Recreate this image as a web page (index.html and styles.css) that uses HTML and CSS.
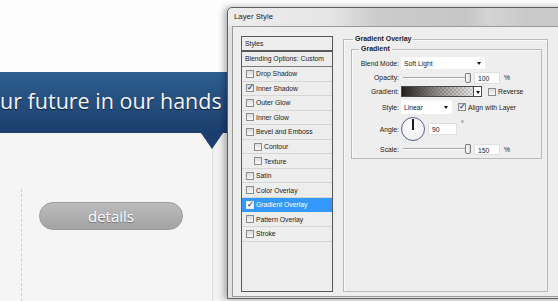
FILE: index.html
```html
<!DOCTYPE html>
<html lang="en">
<head>
    <meta charset="UTF-8">
    <title>Layer Style</title>
    <link rel="stylesheet" href="styles.css">
</head>
<body>
    <div class="site">
        <div class="top"></div>
        <div class="banner">
            <h1>ur future in our hands</h1>
        </div>
        <div class="card">
            <div class="card-main">
                <div class="col">
                    <a href="#" class="details">details</a>
                </div>
            </div>
        </div>
    </div>

    <!-- dialog window over the page -->
    <div class="dialog">
        <div class="titlebar">Layer Style</div>
        <div class="client">
            <div class="styles-list">
                <div class="list-head">Styles</div>
                <div class="list-blend">Blending Options: Custom</div>
                <div class="item"><span class="cb"></span>Drop Shadow</div>
                <div class="item"><span class="cb on"></span>Inner Shadow</div>
                <div class="item"><span class="cb"></span>Outer Glow</div>
                <div class="item"><span class="cb"></span>Inner Glow</div>
                <div class="item"><span class="cb"></span>Bevel and Emboss</div>
                <div class="item sub"><span class="cb"></span>Contour</div>
                <div class="item sub"><span class="cb"></span>Texture</div>
                <div class="item"><span class="cb"></span>Satin</div>
                <div class="item"><span class="cb"></span>Color Overlay</div>
                <div class="item selected"><span class="cb on"></span>Gradient Overlay</div>
                <div class="item"><span class="cb"></span>Pattern Overlay</div>
                <div class="item"><span class="cb"></span>Stroke</div>
            </div>

            <fieldset class="group">
                <legend>Gradient Overlay</legend>
                <fieldset class="group inner">
                    <legend>Gradient</legend>
                    <div class="row r1">
                        <span class="lbl">Blend Mode:</span>
                        <div class="select blend">Soft Light<span class="arrow"></span></div>
                    </div>
                    <div class="row r2">
                        <span class="lbl">Opacity:</span>
                        <div class="slider"><span class="thumb"></span></div>
                        <div class="num">100</div>
                        <span class="unit">%</span>
                    </div>
                    <div class="row r3">
                        <span class="lbl">Gradient:</span>
                        <div class="swatch"><span class="swatch-btn"><span class="arrow"></span></span></div>
                        <span class="cb"></span>
                        <span class="opt">Reverse</span>
                    </div>
                    <div class="row r4">
                        <span class="lbl">Style:</span>
                        <div class="select linear">Linear<span class="arrow"></span></div>
                        <span class="cb on"></span>
                        <span class="opt">Align with Layer</span>
                    </div>
                    <div class="row r5">
                        <span class="lbl">Angle:</span>
                        <div class="dial"><span class="hand"></span></div>
                        <div class="num angle">90</div>
                        <span class="deg">°</span>
                    </div>
                    <div class="row r6">
                        <span class="lbl">Scale:</span>
                        <div class="slider"><span class="thumb"></span></div>
                        <div class="num">150</div>
                        <span class="unit">%</span>
                    </div>
                </fieldset>
            </fieldset>
        </div>
    </div>
</body>
</html>
```

FILE: styles.css
```css
html, body {
    margin: 0;
    height: 100%;
}
body {
    background: #fdfdfd;
    overflow: hidden;
    position: relative;
    font-family: "Liberation Sans", Arial, sans-serif;
}

/* page behind the dialog */
.site {
    display: flex;
    flex-direction: column;
    height: 100%;
}
.top {
    height: 72px;
    flex: none;
}
.banner {
    height: 61px;
    flex: none;
    background: linear-gradient(to bottom, #2e5f8f, #1b3e6e);
    position: relative;
}
.banner::after {
    content: "";
    position: absolute;
    left: 201px;
    top: 61px;
    border-left: 11px solid transparent;
    border-right: 11px solid transparent;
    border-top: 16px solid #1b3e6e;
    z-index: 2;
}
.banner h1 {
    margin: 0;
    padding-top: 14px;
    font-family: "Open Sans", sans-serif;
    font-weight: normal;
    font-size: 21.5px;
    line-height: 29px;
    color: #f4f6f9;
    white-space: nowrap;
    text-shadow: 0 1px 1px rgba(0, 0, 0, 0.6);
}
.card {
    flex: 1;
    min-height: 0;
    display: flex;
    background: #f1f1f1;
}
.card-main {
    width: 212px;
    flex: none;
    display: flex;
    flex-direction: column;
    background: #f5f5f5;
    border-right: 1px solid #dedede;
}
.col {
    flex: 1;
    margin: 56px 0 0 21px;
    border-left: 1px dashed #cfcfcf;
    padding: 13px 0 0 17px;
}
.details {
    display: block;
    width: 142px;
    height: 26px;
    border: 1px solid #9c9c9c;
    border-radius: 14px;
    background: linear-gradient(to bottom, #bcbcbc, #a3a3a3);
    color: #fff;
    text-decoration: none;
    text-align: center;
    font-family: "Open Sans", sans-serif;
    font-size: 15px;
    line-height: 26px;
    text-shadow: 0 1px 1px rgba(0, 0, 0, 0.35);
}

/* dialog */
.dialog {
    position: absolute;
    left: 227px;
    top: 7px;
    width: 345px;
    height: 290px;
    border: 1px solid #5e5e5e;
    border-radius: 5px 5px 0 0;
    background: #e2e2e2;
    box-shadow: -3px 0 6px rgba(0, 0, 0, 0.3);
    display: flex;
    flex-direction: column;
    color: #1c1c1c;
}
.titlebar {
    height: 18px;
    flex: none;
    padding-left: 6px;
    font-size: 7.8px;
    line-height: 18px;
    border-radius: 5px 5px 0 0;
    background: linear-gradient(to right, #ececec 0, #e6e6e6 100px, #cbcbcb 150px, #c6c6c6 240px, #d4d4d4 260px, #c9c9c9 300px);
}
.client {
    flex: 1;
    margin: 0 0 1px 4px;
    border: 1px solid #9a9a9a;
    background: #eeeeee;
    display: flex;
    align-items: flex-start;
    gap: 10px;
    padding: 9px 0 0 8px;
    font-size: 6.8px;
}

.styles-list {
    width: 90px;
    height: 254px;
    flex: none;
    border: 1px solid #585858;
    background: #ededed;
}
.list-head {
    height: 13px;
    line-height: 13px;
    padding-left: 3px;
    border-bottom: 2px solid #5a5a5a;
}
.list-blend {
    height: 14px;
    line-height: 14px;
    padding-left: 3px;
    border-bottom: 1px solid #7a7a7a;
}
.item {
    height: 13.55px;
    border-bottom: 1px solid #d6d6d6;
    display: flex;
    align-items: center;
    gap: 2px;
    padding-left: 4px;
}
.item.sub {
    padding-left: 12px;
}
.item.selected {
    background: #3399ff;
    color: #fff;
    border-bottom-color: #3399ff;
}
.cb {
    width: 6px;
    height: 6px;
    flex: none;
    border: 1px solid #8c8c8c;
    background: linear-gradient(to bottom, #dcdcdc, #f8f8f8);
    position: relative;
}
.cb.on::after {
    content: "✓";
    position: absolute;
    left: 0;
    top: -2px;
    font-size: 8px;
    line-height: 10px;
    color: #264a9c;
    font-weight: bold;
}
.selected .cb {
    border-color: #e9e9e9;
    background: #fff;
}

.group {
    margin: -1px 0 0 0;
    min-width: 0;
    padding: 2px 5px 0 7px;
    width: 191px;
    height: 253px;
    border: 1px solid #b9b9b9;
    box-shadow: inset 1px 1px 0 #fafafa;
}
.group legend {
    margin-left: 2px;
    padding: 0 2px;
    font-weight: bold;
    font-size: 7px;
    line-height: 8px;
}
.group.inner {
    margin: 0;
    width: auto;
    height: auto;
    padding: 4px 0 1px 0;
}
.group.inner legend {
    margin-left: 7px;
}

.row {
    display: flex;
    align-items: center;
    margin-bottom: 3px;
}
.r1 { height: 12px; }
.r2 { height: 11px; }
.r3 { height: 11px; }
.r4 { height: 14px; }
.r5 { height: 24px; }
.r6 { height: 10px; }
.lbl {
    width: 47px;
    flex: none;
    text-align: right;
    margin-right: 2px;
}
.select {
    height: 12px;
    background: #fff;
    border-radius: 1px;
    position: relative;
    padding-left: 3px;
    line-height: 13px;
    box-sizing: border-box;
}
.select.blend {
    width: 84px;
}
.select.linear {
    width: 51px;
    height: 14px;
    line-height: 15px;
}
.arrow {
    position: absolute;
    right: 4px;
    top: 50%;
    margin-top: -1px;
    border-left: 2.5px solid transparent;
    border-right: 2.5px solid transparent;
    border-top: 3px solid #111;
}
.slider {
    width: 68px;
    height: 1px;
    margin-left: 2px;
    background: #a8a8a8;
    border-bottom: 1px solid #fbfbfb;
    position: relative;
}
.thumb {
    position: absolute;
    right: 0;
    top: -4px;
    width: 4px;
    height: 8px;
    border: 1px solid #7c7c7c;
    border-radius: 1px 1px 2px 2px;
    background: linear-gradient(to right, #fefefe, #d9d9d9);
}
.num {
    width: 21px;
    height: 10px;
    margin-left: 3px;
    padding-left: 3px;
    background: #fff;
    border: 1px solid #e0e0e0;
    line-height: 11px;
    box-sizing: content-box;
}
.r6 .num {
    height: 9px;
}
.unit {
    margin-left: 4px;
}
.swatch {
    width: 79px;
    height: 9px;
    border: 1px solid #4a4a4a;
    position: relative;
    background:
        linear-gradient(to right, rgba(38, 28, 28, 1), rgba(60, 50, 50, 0.55) 45%, rgba(255, 255, 255, 0) 100%),
        conic-gradient(#d6d6d6 25%, #fff 0 50%, #d6d6d6 0 75%, #fff 0) 0 0 / 4px 4px;
}
.swatch-btn {
    position: absolute;
    right: 0;
    top: 0;
    width: 7px;
    height: 9px;
    background: #fff;
    border-left: 1px solid #4a4a4a;
}
.swatch-btn .arrow {
    right: 1px;
    border-left-width: 2px;
    border-right-width: 2px;
}
.r3 .cb {
    margin-left: 6px;
}
.r4 .cb {
    margin-left: 6px;
}
.opt {
    margin-left: 2px;
}
.dial {
    width: 22px;
    height: 22px;
    margin-top: -1px;
    border: 1px solid #55648a;
    border-radius: 50%;
    background: radial-gradient(circle at 50% 40%, #ffffff, #ececec);
    position: relative;
}
.hand {
    position: absolute;
    left: 10px;
    top: 1px;
    width: 2px;
    height: 11px;
    background: #1c1c1c;
}
.num.angle {
    width: 24px;
    margin-left: 3px;
}
.deg {
    align-self: flex-start;
    margin: 3px 0 0 4px;
}
```
